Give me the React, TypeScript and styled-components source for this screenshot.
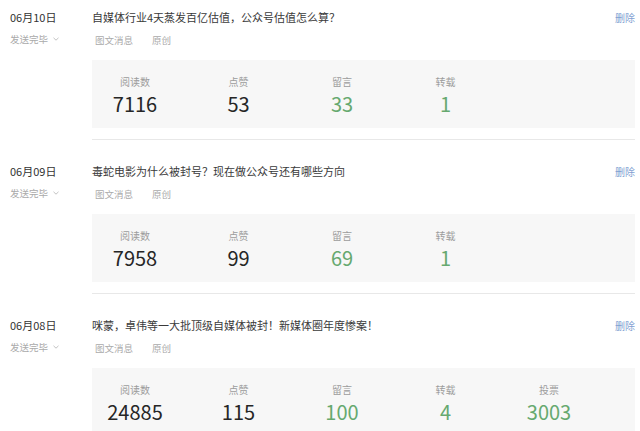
import React from 'react';
import styled, { createGlobalStyle } from 'styled-components';

const GlobalStyle = createGlobalStyle`
  html, body {
    margin: 0;
    padding: 0;
    background: #fff;
    font-family: "Noto Sans CJK SC", "Noto Sans", sans-serif;
    overflow: hidden;
  }
`;

const List = styled.div`
  width: 640px;
`;

const Row = styled.div`
  display: flex;
  padding-top: 23px;
  &:first-child {
    padding-top: 9px;
  }
`;

const Side = styled.div`
  width: 82px;
  padding-left: 10px;
  flex-shrink: 0;
`;

const Date = styled.div`
  font-size: 11px;
  line-height: 16px;
  color: #333;
`;

const Status = styled.div`
  display: flex;
  align-items: center;
  gap: 5px;
  margin-top: 7px;
  font-size: 9.5px;
  line-height: 14px;
  color: #aaa;
`;

const Main = styled.div`
  flex: 1;
  margin-right: 5px;
  padding-bottom: 11px;
  border-bottom: 1px solid #e8e8e8;
`;

const TitleRow = styled.div`
  display: flex;
  justify-content: space-between;
  align-items: center;
  height: 16px;
`;

const Title = styled.div`
  font-size: 11px;
  color: #3a3a3a;
`;

const Delete = styled.a`
  font-size: 10px;
  color: #7f9fd2;
  text-decoration: none;
  cursor: pointer;
`;

const Tags = styled.div`
  display: flex;
  gap: 19px;
  margin-top: 8px;
  padding-left: 3px;
  font-size: 9.5px;
  line-height: 14px;
  color: #aaa;
`;

const Stats = styled.div`
  display: grid;
  grid-template-columns: repeat(5, 86px);
  column-gap: 17.5px;
  margin-top: 13px;
  height: 68px;
  box-sizing: border-box;
  padding: 14px 0 10px;
  background: #f7f7f7;
`;

const Stat = styled.div`
  display: flex;
  flex-direction: column;
  align-items: center;
`;

const Label = styled.div`
  font-size: 10px;
  line-height: 16px;
  color: #9c9c9c;
`;

const Value = styled.div<{ $green?: boolean }>`
  font-size: 20px;
  line-height: 28px;
  color: ${p => (p.$green ? '#66a96f' : '#262626')};
`;

const Chevron = () => (
  <svg width="6" height="4" viewBox="0 0 6 4">
    <polyline points="0.5,0.8 3,3.2 5.5,0.8" fill="none" stroke="#bbb" strokeWidth="0.9" />
  </svg>
);

type Item = {
  date: string;
  title: string;
  stats: { label: string; value: string; green?: boolean }[];
};

const items: Item[] = [
  {
    date: '06月10日',
    title: '自媒体行业4天蒸发百亿估值，公众号估值怎么算？',
    stats: [
      { label: '阅读数', value: '7116' },
      { label: '点赞', value: '53' },
      { label: '留言', value: '33', green: true },
      { label: '转载', value: '1', green: true },
    ],
  },
  {
    date: '06月09日',
    title: '毒蛇电影为什么被封号？现在做公众号还有哪些方向',
    stats: [
      { label: '阅读数', value: '7958' },
      { label: '点赞', value: '99' },
      { label: '留言', value: '69', green: true },
      { label: '转载', value: '1', green: true },
    ],
  },
  {
    date: '06月08日',
    title: '咪蒙，卓伟等一大批顶级自媒体被封！新媒体圈年度惨案！',
    stats: [
      { label: '阅读数', value: '24885' },
      { label: '点赞', value: '115' },
      { label: '留言', value: '100', green: true },
      { label: '转载', value: '4', green: true },
      { label: '投票', value: '3003', green: true },
    ],
  },
];

const App = () => (
  <>
    <GlobalStyle />
    <List>
      {items.map(item => (
        <Row key={item.date}>
          <Side>
            <Date>{item.date}</Date>
            <Status>
              发送完毕
              <Chevron />
            </Status>
          </Side>
          <Main>
            <TitleRow>
              <Title>{item.title}</Title>
              <Delete>删除</Delete>
            </TitleRow>
            <Tags>
              <span>图文消息</span>
              <span>原创</span>
            </Tags>
            <Stats>
              {item.stats.map(s => (
                <Stat key={s.label}>
                  <Label>{s.label}</Label>
                  <Value $green={s.green}>{s.value}</Value>
                </Stat>
              ))}
            </Stats>
          </Main>
        </Row>
      ))}
    </List>
  </>
);

export default App;
